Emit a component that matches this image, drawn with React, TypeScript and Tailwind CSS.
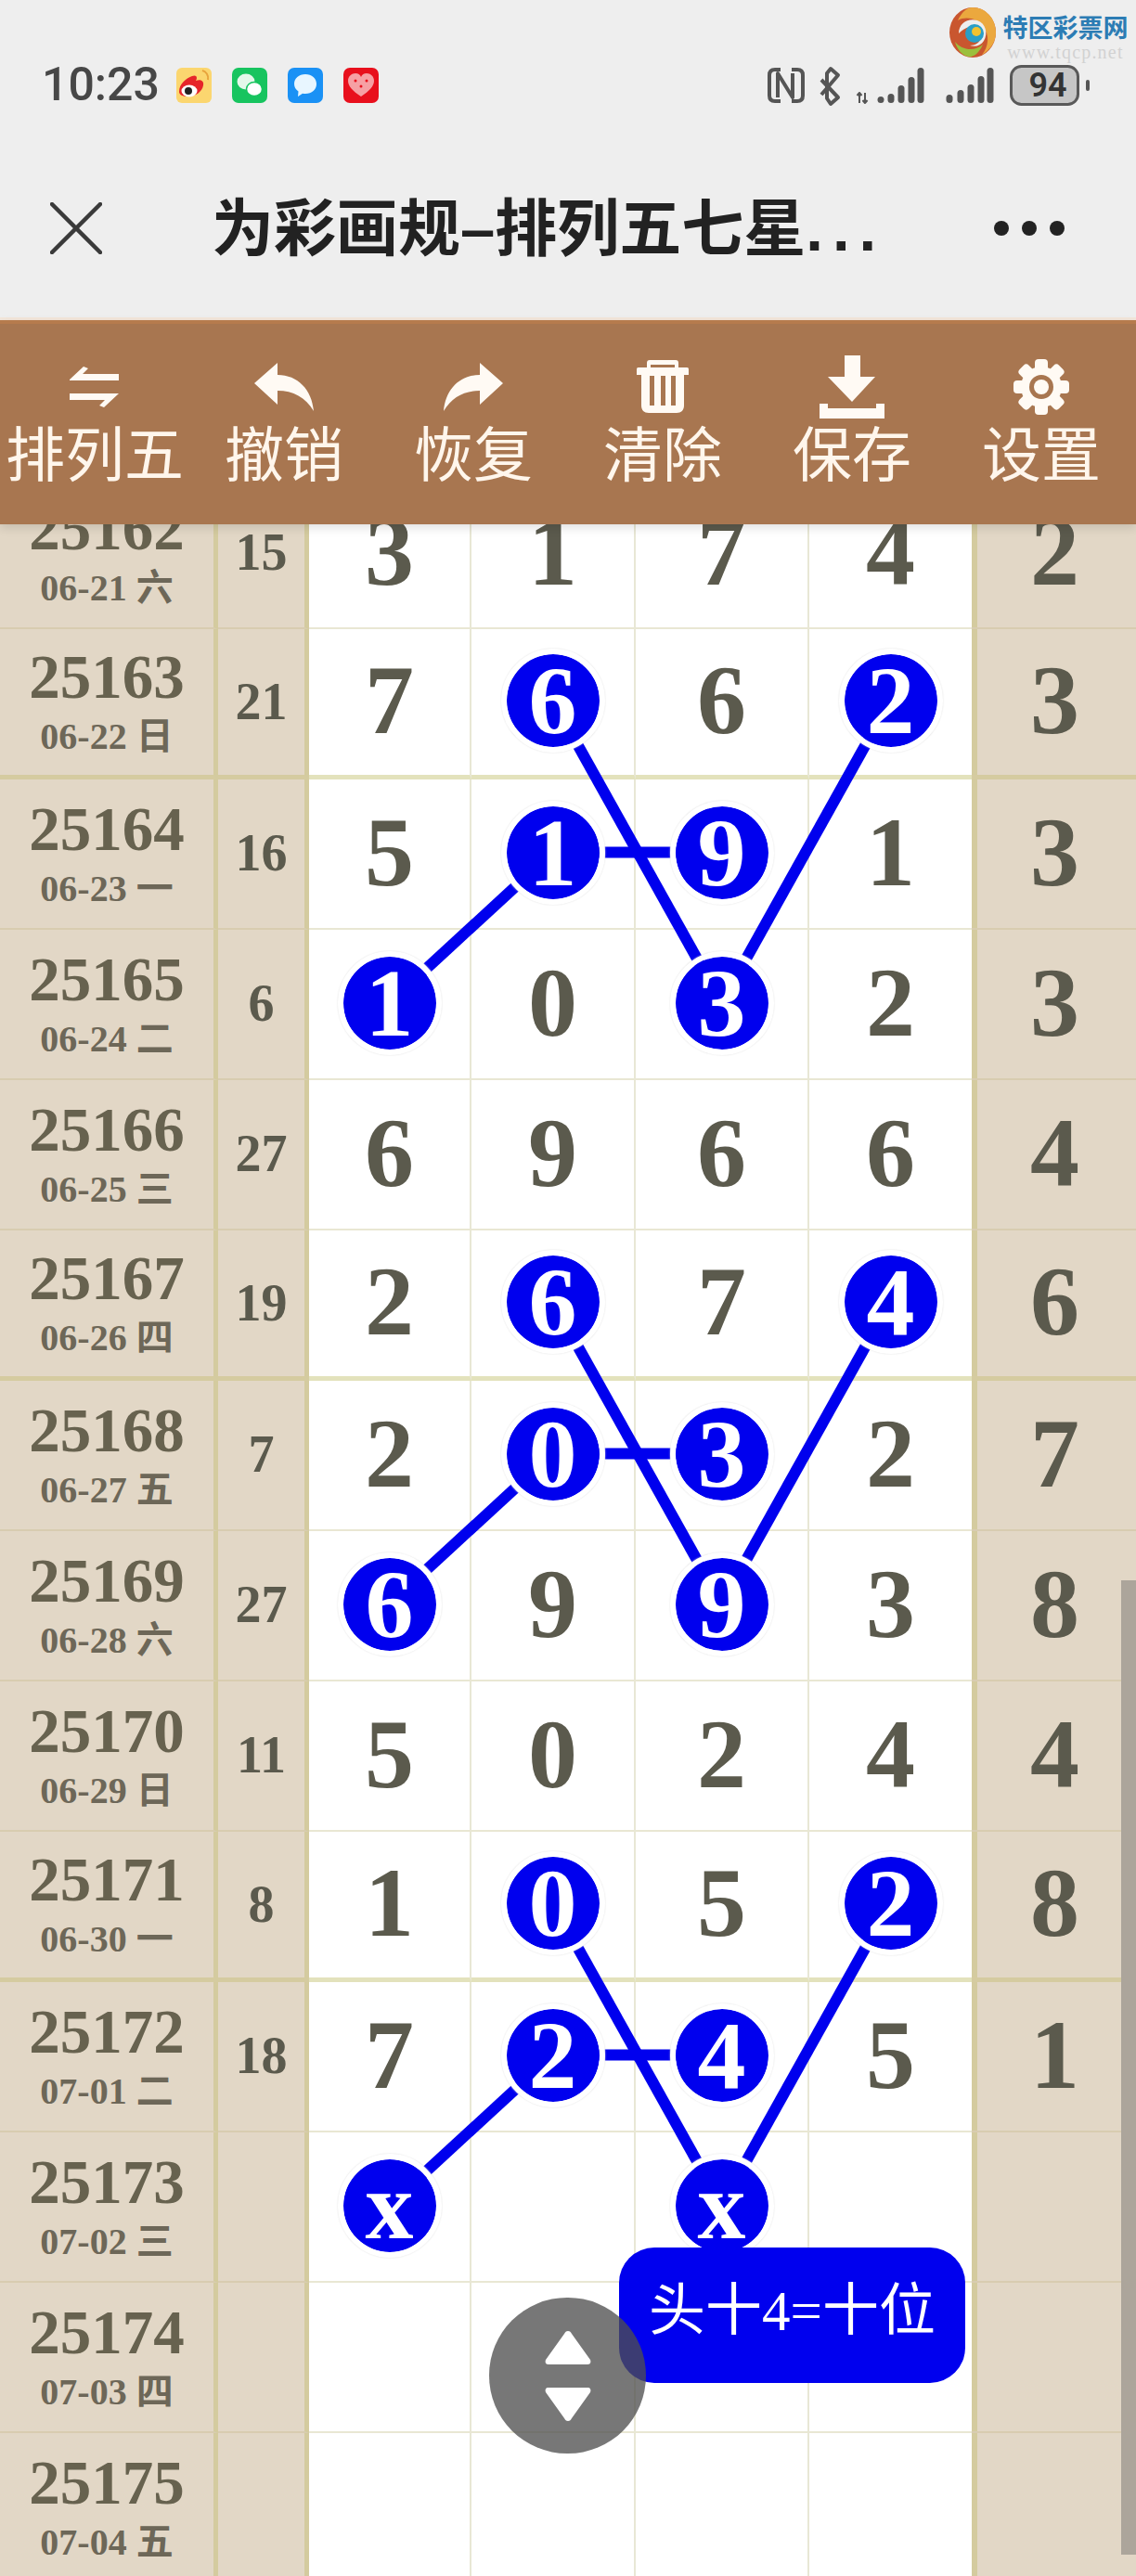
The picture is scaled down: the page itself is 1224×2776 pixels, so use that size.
const serif = "font-['Liberation_Serif','Noto_Sans_CJK_SC',serif]";
const sans = "font-['Liberation_Sans','Noto_Sans_CJK_SC',sans-serif]";

type Row = { issue: string; date: string; sum?: string; nums: string[]; last?: string; balls?: number[] };

const rows: Row[] = [
  { issue: '25162', date: '06-21 六', sum: '15', nums: ['3', '1', '7', '4'], last: '2' },
  { issue: '25163', date: '06-22 日', sum: '21', nums: ['7', '6', '6', '2'], last: '3', balls: [1, 3] },
  { issue: '25164', date: '06-23 一', sum: '16', nums: ['5', '1', '9', '1'], last: '3', balls: [1, 2] },
  { issue: '25165', date: '06-24 二', sum: '6', nums: ['1', '0', '3', '2'], last: '3', balls: [0, 2] },
  { issue: '25166', date: '06-25 三', sum: '27', nums: ['6', '9', '6', '6'], last: '4' },
  { issue: '25167', date: '06-26 四', sum: '19', nums: ['2', '6', '7', '4'], last: '6', balls: [1, 3] },
  { issue: '25168', date: '06-27 五', sum: '7', nums: ['2', '0', '3', '2'], last: '7', balls: [1, 2] },
  { issue: '25169', date: '06-28 六', sum: '27', nums: ['6', '9', '9', '3'], last: '8', balls: [0, 2] },
  { issue: '25170', date: '06-29 日', sum: '11', nums: ['5', '0', '2', '4'], last: '4' },
  { issue: '25171', date: '06-30 一', sum: '8', nums: ['1', '0', '5', '2'], last: '8', balls: [1, 3] },
  { issue: '25172', date: '07-01 二', sum: '18', nums: ['7', '2', '4', '5'], last: '1', balls: [1, 2] },
  { issue: '25173', date: '07-02 三', nums: ['x', '', 'x', ''], balls: [0, 2] },
  { issue: '25174', date: '07-03 四', nums: ['', '', '', ''] },
  { issue: '25175', date: '07-04 五', nums: ['', '', '', ''] },
];

// every fourth row has the heavy rule under it
const heavy = [1, 5, 9];

const colX = [419.5, 595.5, 777.5, 959.5];
const rowY = (i: number) => 162 * i + (heavy.includes(i) ? 76.5 : 78.5);

const links = heavy.flatMap((r) => [
  [colX[1], rowY(r), colX[2], rowY(r + 2)],
  [colX[2], rowY(r + 2), colX[3], rowY(r)],
  [colX[0], rowY(r + 2), colX[1], rowY(r + 1)],
  [colX[1], rowY(r + 1), colX[2], rowY(r + 1)],
]);

function WeiboIcon() {
  return (
    <svg width="38" height="38" viewBox="0 0 38 38">
      <rect width="38" height="38" rx="6" fill="#fbd66f" />
      <path d="M28 3c4 1 7 5 6 10" fill="none" stroke="#e8a33c" strokeWidth="2" />
      <path d="M3 26c0-9 8-15 14-17 5-2 6 2 4 5 6-2 9 1 8 5-1 7-9 12-16 12-6 0-10-2-10-5z" fill="#e6252a" />
      <ellipse cx="14" cy="25" rx="8.5" ry="6.5" fill="#fff" />
      <circle cx="13" cy="25" r="4" fill="#222" />
    </svg>
  );
}

function WechatIcon() {
  return (
    <svg width="38" height="38" viewBox="0 0 38 38">
      <rect width="38" height="38" rx="7" fill="#17c45f" />
      <ellipse cx="15" cy="15" rx="9.5" ry="8.5" fill="#e4f8ea" />
      <ellipse cx="24" cy="23" rx="8.5" ry="7.5" fill="#fff" stroke="#17c45f" strokeWidth="1.5" />
    </svg>
  );
}

function MessageIcon() {
  return (
    <svg width="38" height="38" viewBox="0 0 38 38">
      <rect width="38" height="38" rx="7" fill="#1a91f5" />
      <path d="M19 7c7 0 12 4.500 12 10.500S26 28 19 28c-1 0-2 0-3-.3L11 31l.5-5.500C8.500 23.500 7 20.500 7 17.500 7 11.500 12 7 19 7z" fill="#e8f6ff" />
    </svg>
  );
}

function HeartIcon() {
  return (
    <svg width="38" height="38" viewBox="0 0 38 38">
      <rect width="38" height="38" rx="7" fill="#e80f1c" />
      <path d="M19 31C10 25 5 20 5 14c0-5 4-8 8-8 3 0 5 1.500 6 4 1-2.500 3-4 6-4 4 0 8 3 8 8 0 6-5 11-14 17z" fill="#f6a0a4" />
      <circle cx="13" cy="14" r="1.500" fill="#e80f1c" />
      <circle cx="25" cy="14" r="1.500" fill="#e80f1c" />
      <circle cx="19" cy="20" r="1.500" fill="#e80f1c" />
    </svg>
  );
}

function StatusIcons() {
  const wide = [[949, 103], [960, 100], [971, 91], [982, 82], [992, 72]];
  const narrow = [[1023, 101], [1035, 96], [1046, 90], [1057, 81], [1067, 72]];
  return (
    <svg width="350" height="46" viewBox="826 68 350 46" className="shrink-0">
      <g fill="none" stroke="#555" strokeLinejoin="round">
        <path d="M841 74h-6c-4 0-6 2-6 6v22c0 4 2 6 6 6h6" strokeWidth="4" />
        <path d="M853 74h6c4 0 6 2 6 6v22c0 4-2 6-6 6h-6" strokeWidth="4" />
        <path d="M838 104V78l16 26V78" strokeWidth="4" />
        <path d="M885 85l18 19-8 7-4-6V78l4-5 8 7-18 21" strokeWidth="4" />
        <path d="M926 110V99l-2.500 3M926 99l2.500 3M932 99v11l-2.500-3M932 110l2.500-3" strokeWidth="2" />
      </g>
      {wide.concat(narrow).map(([x, top]) => (
        <rect key={x} x={x - 3.5} y={top} width="7" height={110 - top} rx="3.500" fill="#555" />
      ))}
      <rect x="1089.500" y="70.500" width="72" height="41" rx="11" fill="#c6c6c6" stroke="#595959" strokeWidth="3" />
      <rect x="1170" y="85" width="4" height="12" rx="2" fill="#555" />
    </svg>
  );
}

function Logo() {
  return (
    <svg width="50" height="54" viewBox="0 0 50 54">
      <ellipse cx="25" cy="27" rx="25" ry="27" fill="#c9562f" />
      <path d="M25 0c14 0 25 12 25 27 0 10-6 19-15 24C42 43 44 30 36 20 30 12 18 9 9 14 13 6 18 0 25 0z" fill="#eba83e" />
      <path d="M6 37c7 9 21 11 30 3-4 9-10 14-16 13C14 52 8 45 6 37z" fill="#9bbf3d" />
      <path d="M10 28C10 17 20 11 30 14c9 3 12 14 7 22-3 5-9 7-15 5 6 0 11-3 12-9 1-7-5-12-12-11-5 1-9 4-12 7z" fill="#eeeeee" />
      <circle cx="27" cy="28" r="10" fill="#2a9fc7" />
      <circle cx="29" cy="26" r="5" fill="#f2c230" />
    </svg>
  );
}

function SwapIcon() {
  return (
    <svg width="54" height="46" viewBox="0 0 54 46" fill="#fffaf4">
      <path d="M0 15 15 1l5 2-6 6h39v7H0z" />
      <path d="M0 30h53L37 45l-5-2 6-6H0z" />
    </svg>
  );
}

function UndoIcon({ flip }: { flip?: boolean }) {
  return (
    <svg width="70" height="58" viewBox="0 0 70 58" fill="#fffaf4" className={flip ? '-scale-x-100' : ''}>
      <path d="M3 25 28 3v13c22 0 37 16 39 39-9-15-22-22-39-22v15z" />
    </svg>
  );
}

function TrashIcon() {
  return (
    <svg width="56" height="60" viewBox="0 0 56 60">
      <path d="M11 9V4c0-2 1-3 3-3h28c2 0 3 1 3 3v5h9c2 0 2 1 2 3v5H51v33c0 5-3 8-8 8H13c-5 0-8-3-8-8V17H0v-5c0-2 0-3 2-3zm4 0h26V6H15z" fill="#fffaf4" fillRule="evenodd" />
      <rect x="14" y="18" width="5" height="32" fill="#a87650" />
      <rect x="26" y="18" width="5" height="32" fill="#a87650" />
      <rect x="37" y="18" width="5" height="32" fill="#a87650" />
    </svg>
  );
}

function DownloadIcon() {
  return (
    <svg width="70" height="68" viewBox="0 0 70 68" fill="#fffaf4">
      <path d="M27 0h17v23h16L35 50 9 23h18z" />
      <path d="M0 52h9v5h52v-5h9v16H0z" />
    </svg>
  );
}

function GearIcon() {
  const teeth = [0, 45, 90, 135, 180, 225, 270, 315];
  return (
    <svg width="62" height="62" viewBox="-31 -31 62 62" fill="#fffaf4">
      {teeth.map((deg) => (
        <rect key={deg} x="-7" y="-30" width="14" height="14" rx="4" transform={`rotate(${deg})`} />
      ))}
      <circle r="22" />
      <circle r="13" fill="#a87650" />
      <circle r="8" />
    </svg>
  );
}

const tools = [
  { label: '排列五', icon: <SwapIcon /> },
  { label: '撤销', icon: <UndoIcon /> },
  { label: '恢复', icon: <UndoIcon flip /> },
  { label: '清除', icon: <TrashIcon /> },
  { label: '保存', icon: <DownloadIcon /> },
  { label: '设置', icon: <GearIcon /> },
];

function Ball({ value }: { value: string }) {
  return (
    <div className="relative z-10 flex h-[112px] w-[112px] items-center justify-center rounded-full border-[6px] border-white bg-[#0000ee] bg-clip-padding text-[104px] leading-none text-white shadow-[0_0_2px_#dddddd]">
      {value}
    </div>
  );
}

export default function App() {
  return (
    <div className={`relative h-[2776px] w-[1224px] overflow-hidden bg-white ${sans}`}>
      <header className="relative z-20 h-[345px] border-b-[3px] border-[#f3e6da] bg-[#eeeeee]">
        <div className="flex h-[114px] items-end">
          <span className="ml-[45px] mb-[-1px] font-['Roboto',sans-serif] text-[50px] font-medium leading-[48px] text-[#474747]">10:23</span>
          <div className="mb-[3px] ml-[18px] flex gap-[22px]">
            <WeiboIcon />
            <WechatIcon />
            <MessageIcon />
            <HeartIcon />
          </div>
          <div className="relative ml-auto mr-[48px] mb-[-1px] flex">
            <StatusIcons />
            <span className="absolute right-[11px] top-[3px] w-[72px] text-center font-['Roboto',sans-serif] text-[36px] font-semibold leading-[40px] text-[#333333]">94</span>
          </div>
        </div>
        <div className="flex h-[228px] items-center pt-[36px]">
          <svg width="56" height="56" viewBox="0 0 56 56" className="ml-[54px] shrink-0" stroke="#3a3a3a" strokeWidth="4.500" strokeLinecap="round">
            <path d="M2 2l52 52M54 2 2 54" />
          </svg>
          <h1 className="ml-[118px] whitespace-nowrap text-[67px] font-bold leading-none text-[#222222]">
            为彩画规–排列五七星<span className="tracking-[10px]">...</span>
          </h1>
          <div className="ml-auto mr-[77px] flex gap-[14px]">
            <span className="h-4 w-4 rounded-full bg-[#222222]" />
            <span className="h-4 w-4 rounded-full bg-[#222222]" />
            <span className="h-4 w-4 rounded-full bg-[#222222]" />
          </div>
        </div>
        <div className="absolute right-[9px] top-[8px] flex items-start gap-[8px]">
          <Logo />
          <div className="flex w-[134px] flex-col items-center pt-[8px]">
            <span className="whitespace-nowrap text-[27px] font-bold leading-[30px] text-[#2c7cb4]">特区彩票网</span>
            <span className={`${serif} whitespace-nowrap text-[20px] leading-[20px] tracking-[1.200px] text-[#d2d2d2]`}>www.tqcp.net</span>
          </div>
        </div>
      </header>

      <nav className="relative z-20 grid h-[220px] grid-cols-6 border-t-[4px] border-[#b67b4d] bg-[#a87650] pt-[33px] shadow-[0_4px_10px_rgba(0,0,0,0.12)]">
        {tools.map((tool) => (
          <div key={tool.label} className="flex flex-col items-center">
            <div className="flex h-[70px] items-center justify-center">{tool.icon}</div>
            <span className="mt-[4px] whitespace-nowrap text-[64px] leading-[70px] text-[#fff6ec]">{tool.label}</span>
          </div>
        ))}
      </nav>

      <div className={`relative -mt-[49px] ${serif} font-bold`}>
        <svg className="absolute left-0 top-0 z-0" width="1224" height="2268" stroke="#0000ee" strokeWidth="12">
          {links.map(([x1, y1, x2, y2]) => (
            <line key={`${x1}-${y1}-${x2}-${y2}`} x1={x1} y1={y1} x2={x2} y2={y2} />
          ))}
        </svg>
        {rows.map((row, i) => {
          const isHeavy = heavy.includes(i);
          const tanRule = isHeavy ? 'border-b-[5px] border-b-[#d5cba0]' : 'border-b-2 border-b-[#d8ccb0]';
          const whiteRule = isHeavy ? 'border-b-[5px] border-b-[#e3e2bc]' : 'border-b-2 border-b-[#e9e7d3]';
          return (
            <div key={row.issue} className="grid h-[162px] grid-cols-[235px_98px_175px_177px_187px_175px_6px_171px]">
              <div className={`flex flex-col items-center justify-center border-r-[5px] border-r-[#d4cb9f] bg-[#e2d7c6] pb-[3px] text-[#67624f] ${tanRule}`}>
                <span className="text-[67px] leading-[67px]">{row.issue}</span>
                <span className="mt-[11px] whitespace-nowrap text-[40px] leading-[40px] text-[#6d6758]">{row.date}</span>
              </div>
              <div className={`flex items-center justify-center border-r-[5px] border-r-[#d4cb9f] bg-[#e2d7c6] pb-[2px] text-[56px] leading-none text-[#5b5a4d] ${tanRule}`}>
                {row.sum}
              </div>
              {row.nums.map((num, col) => (
                <div
                  key={col}
                  className={`flex items-center justify-center pb-[3px] text-[106px] leading-none text-[#5b5a4d] ${whiteRule} ${col < 3 ? 'border-r-2 border-r-[#e8e7d5]' : ''}`}
                >
                  {row.balls?.includes(col) ? <Ball value={num} /> : num}
                </div>
              ))}
              <div className={`bg-[#d4cb9f] ${tanRule}`} />
              <div className={`flex items-center justify-center bg-[#e2d7c6] pr-[4px] pb-[3px] text-[106px] leading-none text-[#5b5a4d] ${tanRule}`}>
                {row.last}
              </div>
            </div>
          );
        })}
      </div>

      <div className="absolute right-0 top-[1703px] z-20 h-[1050px] w-4 bg-[#aca59b]" />

      <div className="absolute left-[667px] top-[2422px] z-20 flex h-[146px] w-[373px] items-center justify-center rounded-[38px] bg-[#0000ee] pb-[8px] text-[61px] text-white">
        头十<span className={serif}>4=</span>十位
      </div>

      <div className="absolute left-[527px] top-[2476px] z-30 flex h-[168px] w-[169px] flex-col items-center justify-center gap-[25px] rounded-full bg-[rgba(78,78,78,0.77)]">
        <svg width="50" height="36" viewBox="0 0 50 36" fill="#fff">
          <path d="M25 0c2 0 3 1 4 3l20 28c1 3 0 5-3 5H4c-3 0-4-2-3-5L21 3c1-2 2-3 4-3z" />
        </svg>
        <svg width="50" height="36" viewBox="0 0 50 36" fill="#fff">
          <path d="M25 36c2 0 3-1 4-3L49 5c1-3 0-5-3-5H4C1 0 0 2 1 5l20 28c1 2 2 3 4 3z" />
        </svg>
      </div>
    </div>
  );
}
